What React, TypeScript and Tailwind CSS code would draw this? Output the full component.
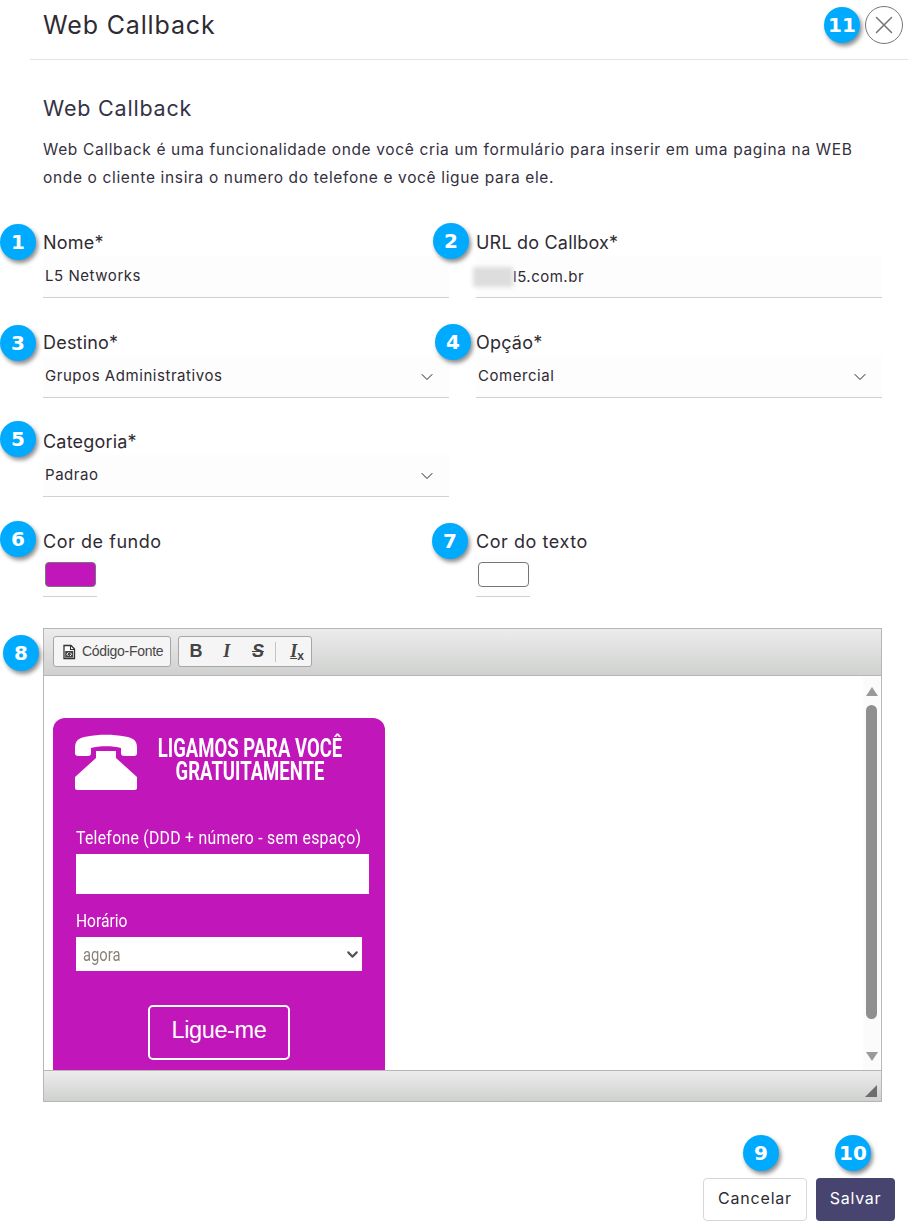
import React from "react";
import { ChevronDown, X } from "lucide-react";

const Badge = ({ n, className }: { n: string; className: string }) => (
  <span
    className={`absolute flex h-[36px] w-[36px] items-center justify-center rounded-full bg-[#00aaff] text-[20px] font-bold text-white shadow-[2px_3px_4px_rgba(0,0,0,0.45)] [font-family:'DejaVu_Sans',sans-serif] ${className}`}
  >
    {n}
  </span>
);

const Field = ({
  label,
  badge,
  badgeClass,
  value,
  select,
  className = "",
}: {
  label: string;
  badge: string;
  badgeClass: string;
  value: string;
  select?: boolean;
  className?: string;
}) => (
  <div className={`relative ${className}`}>
    <Badge n={badge} className={badgeClass} />
    <div className="h-[26px] whitespace-nowrap text-[18px] leading-[26px] tracking-[0.2px] text-[#2f2b33]">{label}</div>
    <div className="relative flex h-[42px] items-center justify-between border-b border-[#cfcfd4] bg-[#fdfdfd] pl-[2px] pr-[12px] text-[15px] tracking-[0.55px] text-[#2f2b33]">
      <span>{value}</span>
      {select && <ChevronDown className="h-[20px] w-[20px] text-[#222]" strokeWidth={1.2} />}
    </div>
  </div>
);

const ColorField = ({
  label,
  badge,
  badgeClass,
  color,
}: {
  label: string;
  badge: string;
  badgeClass: string;
  color: string;
}) => (
  <div className="relative mt-px">
    <Badge n={badge} className={badgeClass} />
    <div className="h-[26px] whitespace-nowrap text-[18px] leading-[26px] tracking-[0.55px] text-[#2f2b33]">{label}</div>
    <div className="flex h-[42px] w-[54px] items-start border-b border-[#cfcfd4] bg-[#fdfdfd] pl-[2px] pr-[1px] pt-[7px]">
      <div className={`h-[25px] w-full rounded-[4px] border border-[#767676] ${color}`} />
    </div>
  </div>
);

const PhoneIcon = () => (
  <svg viewBox="0 0 62 56" className="-ml-px h-[56px] w-[62px] shrink-0 fill-white">
    <path d="M0 14C0 6 4 4 12 2.500C24 0 38 0 50 2.500C58 4 62 6 62 14V19C62 21 61 22 59 22H49C47 22 46 21 46 19V14C38 11.500 24 11.500 16 14V19C16 21 15 22 13 22H3C1 22 0 21 0 19Z" />
    <path d="M21 17H41V24L62 43V54C62 55 61 56 60 56H2C1 56 0 55 0 54V43L21 24Z" />
  </svg>
);

const SourceIcon = () => (
  <svg viewBox="0 0 16 16" className="h-[16px] w-[16px]">
    <path d="M3 1.500H10L13.500 5V14.500H3Z" fill="#fff" stroke="#333" strokeWidth="1.300" />
    <path d="M9.500 1.500V5.500H13.500" fill="none" stroke="#333" strokeWidth="1.100" />
    <rect x="4.200" y="7" width="8" height="6.500" fill="#444" />
    <path d="M7.500 8.500L5.800 10.200L7.500 12M9 8.500L10.700 10.200L9 12" fill="none" stroke="#fff" strokeWidth="1" />
  </svg>
);

const toolbarGradient = "bg-gradient-to-b from-[#ececec] to-[#cfd1cf]";

const Editor = () => (
  <div className="relative flex h-[474px] flex-col border border-[#b6b6b6] [font-family:'Liberation_Sans',sans-serif]">
    <Badge n="8" className="-left-[41px] top-[6px]" />
    <div className={`flex h-[47px] shrink-0 items-start gap-[7px] border-b border-[#b6b6b6] px-[9px] pt-[7px] ${toolbarGradient}`}>
      <div className="flex h-[31px] w-[118px] items-center gap-[5px] rounded-[3px] border border-[#a6a6a6] bg-[#f5f5f5] pl-[7px] text-[14px] tracking-[-0.3px] text-[#474747]">
        <SourceIcon />
        <span>Código-Fonte</span>
      </div>
      <div className="flex h-[31px] w-[134px] items-center rounded-[3px] border border-[#a6a6a6] bg-[#f5f5f5] text-[#444]">
        <span className="w-[34px] text-center text-[18px] font-bold">B</span>
        <span className="w-[28px] text-center text-[18px] font-bold italic [font-family:'Liberation_Serif',serif]">I</span>
        <span className="w-[35px] text-center text-[18px] font-bold italic line-through">S</span>
        <span className="h-[20px] w-px bg-[#c4c4c4]" />
        <span className="relative w-[35px] text-center text-[18px] font-bold italic underline [font-family:'Liberation_Serif',serif]">
          I<span className="absolute left-[21px] top-[9px] text-[12px] not-italic no-underline [font-family:'Liberation_Sans',sans-serif]">x</span>
        </span>
      </div>
    </div>
    <div className="flex min-h-0 flex-1 justify-between overflow-hidden bg-white pl-[9px] pt-[42px]">
      <div className="flex h-[400px] w-[332px] flex-col rounded-t-[12px] bg-[#c116b9] pl-[23px] pr-[15px] pt-[16px] text-white [font-family:Roboto,sans-serif]">
        <div className="flex h-[56px] items-start">
          <PhoneIcon />
          <div className="flex w-[226px] shrink-0 scale-x-[0.74] flex-col items-center whitespace-nowrap pt-[3px] text-[25px] font-bold leading-[23px]">
            <span>LIGAMOS PARA VOCÊ</span>
            <span>GRATUITAMENTE</span>
          </div>
        </div>
        <div className="mt-[36px] h-[24px] origin-left scale-x-[0.83] whitespace-nowrap text-[19px] leading-[24px] tracking-[0.35px]">
          Telefone (DDD + número - sem espaço)
        </div>
        <div className="mt-[4px] h-[40px] w-[293px] bg-white" />
        <div className="mt-[14px] h-[29px] origin-left scale-x-[0.82] text-[19px] leading-[26px]">Horário</div>
        <div className="flex h-[34px] w-[286px] items-center justify-between bg-white pl-[7px] pr-[1px] text-[#8a8178]">
          <span className="origin-left scale-x-[0.82] text-[18px]">agora</span>
          <ChevronDown className="h-[17px] w-[17px] text-[#555]" strokeWidth={3} />
        </div>
        <div className="ml-[72px] mt-[34px] flex h-[55px] w-[142px] items-center justify-center self-start rounded-[5px] border-2 border-white pb-[3px] text-[23.500px] tracking-[-0.400px] [font-family:'Liberation_Sans',sans-serif]">
          Ligue-me
        </div>
      </div>
      <div className="-mt-[42px] mr-[1px] flex h-[394px] w-[17px] flex-col items-center bg-[#fbfbfb] pt-[11px]">
        <div className="h-0 w-0 border-x-[6.500px] border-b-[9px] border-x-transparent border-b-[#999]" />
        <div className="mt-[9px] h-[314px] w-[11px] rounded-full bg-[#8f8f8f]" />
        <div className="mt-[33px] h-0 w-0 border-x-[6.500px] border-t-[9px] border-x-transparent border-t-[#999]" />
      </div>
    </div>
    <div className={`relative h-[31px] shrink-0 border-t border-[#b6b6b6] ${toolbarGradient}`}>
      <div className="absolute bottom-[4px] right-[4px] h-0 w-0 border-b-[12px] border-l-[12px] border-b-[#6d6d6d] border-l-transparent" />
    </div>
  </div>
);

export default function App() {
  return (
    <div className="h-[1226px] w-[908px] overflow-hidden bg-white text-[#2f2b33] [font-family:Inter,sans-serif]">
      <header className="relative ml-[30px] flex h-[60px] items-center border-b border-[#e2e2e2] pb-[8px] pl-[13px]">
        <h1 className="text-[25px] font-normal tracking-[0.85px]">Web Callback</h1>
        <Badge n="11" className="left-[794px] top-[7px]" />
        <button className="absolute right-[5px] top-[6px] flex h-[38px] w-[38px] items-center justify-center rounded-full border border-[#777] text-[#777]">
          <X className="h-[30px] w-[30px]" strokeWidth={1.250} />
        </button>
      </header>

      <main className="pl-[43px] pr-[26px]">
        <h2 className="mt-[33px] text-[21.500px] font-normal leading-[30px] tracking-[0.8px] text-[#343345]">Web Callback</h2>
        <p className="mt-[13px] w-[830px] text-[15.500px] leading-[27.500px] tracking-[0.65px] text-[#343040]">
          Web Callback é uma funcionalidade onde você cria um formulário para inserir em uma pagina na WEB onde o cliente insira o numero do telefone e você ligue para ele.
        </p>

        <div className="mt-[39px] grid grid-cols-[406px_406px] gap-x-[27px] gap-y-[31px]">
          <Field label="Nome*" badge="1" badgeClass="-left-[43px] -top-[6px]" value="L5 Networks" />
          <div className="relative">
            <Field label="URL do Callbox*" badge="2" badgeClass="-left-[43px] -top-[7px]" value="" />
            <span className="absolute left-[37px] top-[36px] text-[15px] leading-[22px] tracking-[0.5px]">l5.com.br</span>
            <span className="absolute -left-[3px] top-[37px] h-[20px] w-[40px] bg-[#dddddd] blur-[2px]" />
          </div>
          <Field label="Destino*" badge="3" badgeClass="-left-[43px] -top-[5px]" value="Grupos Administrativos" select className="mt-px" />
          <Field label="Opção*" badge="4" badgeClass="-left-[41px] -top-[6px]" value="Comercial" select className="mt-px" />
          <Field label="Categoria*" badge="5" badgeClass="-left-[43px] -top-[8px]" value="Padrao" select />
          <div />
          <ColorField label="Cor de fundo" badge="6" badgeClass="-left-[43px] -top-[8px]" color="bg-[#c116b9]" />
          <ColorField label="Cor do texto" badge="7" badgeClass="-left-[44px] -top-[6px]" color="bg-white" />
        </div>

        <div className="mt-[31px] w-[839px]">
          <Editor />
        </div>
      </main>

      <footer className="relative mt-[76px] flex justify-end gap-[9px] pr-[13px]">
        <Badge n="9" className="left-[743px] -top-[43px]" />
        <Badge n="10" className="left-[835px] -top-[43px]" />
        <button className="h-[43px] w-[104px] rounded-[4px] border border-[#d8d8d8] bg-white pb-[3px] text-[16px] tracking-[0.8px] text-[#2f2b33]">Cancelar</button>
        <button className="h-[43px] w-[79px] rounded-[4px] bg-[#47456f] pb-[3px] text-[16px] tracking-[0.7px] text-white">Salvar</button>
      </footer>
    </div>
  );
}
